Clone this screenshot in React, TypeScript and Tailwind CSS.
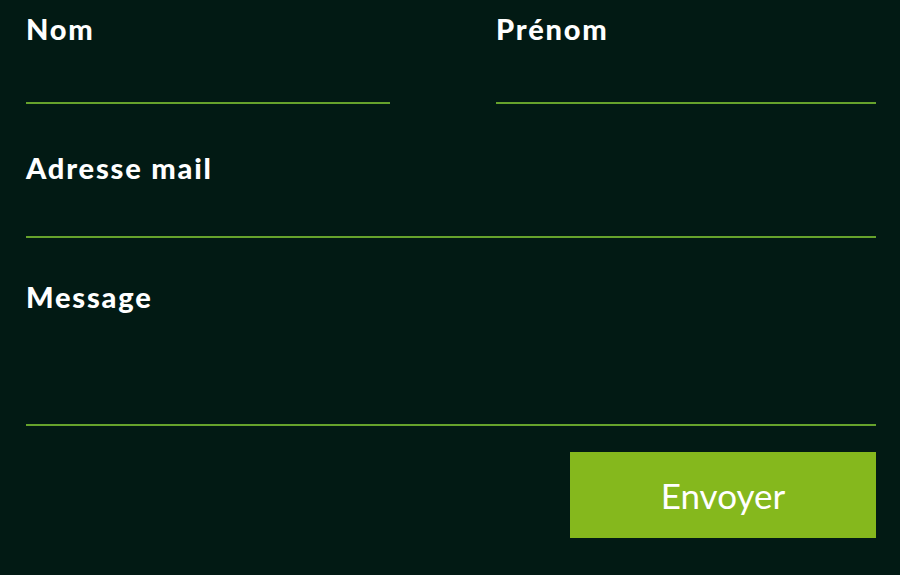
function Field({ label, className, children }: { label: string; className?: string; children: React.ReactNode }) {
  return (
    <label className={`flex flex-col ${className ?? ''}`}>
      <span className="text-[29px] font-black leading-none tracking-[1.8px]">{label}</span>
      {children}
      <div className="h-[2px] w-full bg-[#66a22c]" />
    </label>
  );
}

export default function App() {
  return (
    <div className="min-h-[575px] w-full bg-[#021a14] font-['Lato','Liberation_Sans',sans-serif] text-white">
      <form
        className="flex flex-col pl-[26px] pr-[24px] pt-[14px]"
        onSubmit={(e) => e.preventDefault()}
      >
        {/* Nom / Prénom */}
        <div className="flex">
          <Field label="Nom" className="w-[364px]">
            <input type="text" className="h-[59px] w-full bg-transparent outline-none" />
          </Field>
          <Field label="Prénom" className="ml-[106px] flex-1">
            <input type="text" className="h-[59px] w-full bg-transparent outline-none" />
          </Field>
        </div>

        {/* Adresse mail */}
        <Field label="Adresse mail" className="mt-[49px]">
          <input type="email" className="h-[54px] w-full bg-transparent outline-none" />
        </Field>

        {/* Message */}
        <Field label="Message" className="mt-[44px]">
          <textarea className="h-[113px] w-full resize-none bg-transparent outline-none" />
        </Field>

        <div className="mt-[26px] flex justify-end">
          <button
            type="submit"
            className="flex h-[86px] w-[306px] items-center justify-center bg-[#85b81d] text-[35px] leading-none text-white"
          >
            Envoyer
          </button>
        </div>
      </form>
    </div>
  );
}
